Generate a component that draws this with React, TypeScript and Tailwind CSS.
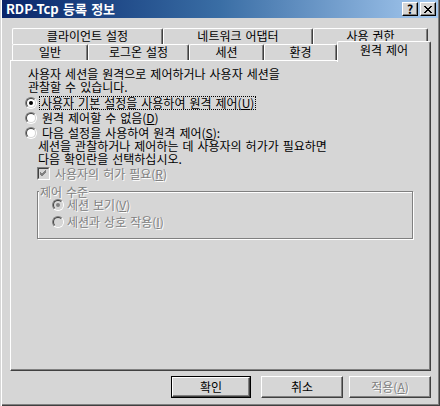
import React from 'react';

const face = "font-['Noto_Sans_CJK_KR',sans-serif]";
const dim = 'text-[#808080] [text-shadow:1px_1px_0_#fff]';

function Radio({ checked = false, disabled = false }: { checked?: boolean; disabled?: boolean }) {
  return (
    <span className="relative inline-block h-3 w-3 shrink-0 rounded-full border border-t-[#808080] border-l-[#808080] border-r-white border-b-white">
      <span
        className={`absolute inset-0 rounded-full border border-t-[#404040] border-l-[#404040] border-r-[#d6d6d6] border-b-[#d6d6d6] ${
          disabled ? 'bg-[#d6d6d6]' : 'bg-white'
        }`}
      >
        {checked && (
          <span className={`absolute left-[2px] top-[2px] h-1 w-1 rounded-full ${disabled ? 'bg-[#808080]' : 'bg-black'}`} />
        )}
      </span>
    </span>
  );
}

function Check() {
  return (
    <span className="relative inline-block h-[13px] w-[13px] shrink-0 border border-t-[#808080] border-l-[#808080] border-r-white border-b-white">
      <span className="absolute inset-0 border border-t-[#404040] border-l-[#404040] border-r-[#d6d6d6] border-b-[#d6d6d6] bg-[#d6d6d6]">
        <svg width="9" height="9" viewBox="0 0 9 9" className="absolute left-0 top-0">
          <path d="M1 4 L3 6 L7 2 M1 5 L3 7 L7 3 M1 3 L3 5 L7 1" stroke="#808080" strokeWidth="1" fill="none" shapeRendering="crispEdges" />
        </svg>
      </span>
    </span>
  );
}

function Tab({ label, w, front }: { label: string; w: string; front?: boolean }) {
  return (
    <div
      className={`${w} ${front ? 'h-[17px]' : 'h-[16px]'} flex shrink-0 items-start justify-center rounded-t-[2px] border-l border-t border-r border-l-white border-t-white border-r-[#404040] shadow-[inset_-1px_0_#808080] leading-[14px]`}
    >
      {label}
    </div>
  );
}

function Btn({ label, def, disabled, w }: { label: React.ReactNode; def?: boolean; disabled?: boolean; w: string }) {
  return (
    <div className={`${w} h-[22px] ${def ? 'border border-black' : ''}`}>
      <div
        className={`flex h-full w-full items-center justify-center border border-t-white border-l-white border-r-[#404040] border-b-[#404040] shadow-[inset_-1px_-1px_#808080] ${
          disabled ? dim : ''
        }`}
      >
        {label}
      </div>
    </div>
  );
}

export default function App() {
  return (
    <div
      className={`${face} relative flex h-[406px] w-[440px] flex-col overflow-hidden bg-[#d6d6d6] text-[12px] [word-spacing:1.3px] text-black shadow-[inset_1px_0_#d6d6d6,inset_2px_0_#fff,inset_-1px_-1px_#404040,inset_-2px_-2px_#808080]`}
    >
      {/* title bar */}
      <div className="mx-[2px] flex h-[18px] shrink-0 items-center justify-between bg-linear-to-r from-[#0a246a] via-[#3a6ea5] to-[#a6caf0] pl-[4px] pr-[2px]">
        <span className="text-[13px] font-bold leading-[16px] text-white">RDP-Tcp 등록 정보</span>
        <div className="flex gap-[2px]">
          <div className="flex h-[14px] w-[16px] items-center justify-center border border-t-white border-l-white border-r-black border-b-black bg-[#d6d6d6] text-[12px] font-bold leading-none shadow-[inset_-1px_-1px_#808080]">
            ?
          </div>
          <div className="flex h-[14px] w-[16px] items-center justify-center border border-t-white border-l-white border-r-black border-b-black bg-[#d6d6d6] shadow-[inset_-1px_-1px_#808080]">
            <svg width="8" height="7" viewBox="0 0 8 7">
              <path d="M0 0 L7 7 M1 0 L8 7 M7 0 L0 7 M8 0 L1 7" stroke="#000" strokeWidth="1" shapeRendering="crispEdges" />
            </svg>
          </div>
        </div>
      </div>

      {/* tabs */}
      <div className="ml-[10px] mt-[10px] flex flex-col">
        <div className="flex h-[15px] pl-[2px]">
          <Tab label="클라이언트 설정" w="w-[151px]" />
          <Tab label="네트워크 어댑터" w="w-[150px]" />
          <Tab label="사용 권한" w="w-[115px]" />
        </div>
        <div className="flex h-[17px] items-start pl-[2px] pt-[1px]">
          <Tab label="일반" w="w-[76px]" front />
          <Tab label="로그온 설정" w="w-[101px]" front />
          <Tab label="세션" w="w-[75px]" front />
          <Tab label="환경" w="w-[73px]" front />
          <div className="relative z-10 -mt-[3px] flex h-[21px] w-[94px] shrink-0 justify-center rounded-t-[2px] border-l border-t border-r border-l-white border-t-white border-r-[#404040] bg-[#d6d6d6] pt-[1px] leading-[14px] shadow-[inset_-1px_0_#808080]">
            원격 제어
          </div>
        </div>

        {/* panel */}
        <div className="flex h-[311px] w-[421px] flex-col border border-l-white border-t-white border-r-[#404040] border-b-[#404040] pl-[17px] pt-[6px] shadow-[inset_-1px_-1px_#808080]">
          <p className="leading-[13px]">
            사용자 세션을 원격으로 제어하거나 사용자 세션을
            <br />
            관찰할 수 있습니다.
          </p>
          <div className="mt-[2px] flex h-[15px] items-center gap-[1px] -ml-[3px]">
            <Radio checked />
            <span className="ml-[1px] border border-dotted border-black px-[1px] leading-[12px]">
              사용자 기본 설정을 사용하여 원격 제어(<u>U</u>)
            </span>
          </div>
          <div className="flex h-[15px] items-center gap-[5px] -ml-[3px]">
            <Radio />
            <span className="leading-[13px]">
              원격 제어할 수 없음(<u>D</u>)
            </span>
          </div>
          <div className="flex h-[15px] items-center gap-[5px] -ml-[3px]">
            <Radio />
            <span className="leading-[13px]">
              다음 설정을 사용하여 원격 제어(<u>S</u>):
            </span>
          </div>
          <p className="ml-[10px] -mt-[1px] leading-[13px]">
            세션을 관찰하거나 제어하는 데 사용자의 허가가 필요하면
            <br />
            다음 확인란을 선택하십시오.
          </p>
          <div className="ml-[9px] mt-[1px] flex h-[15px] items-center gap-[5px]">
            <Check />
            <span className={`${dim} leading-[13px]`}>
              사용자의 허가 필요(<u>R</u>)
            </span>
          </div>
          <div className="relative ml-[9px] mt-[10px] h-[48px] w-[376px] border border-[#808080] shadow-[inset_1px_1px_#fff,1px_1px_#fff]">
            <span className={`absolute -top-[7px] left-[1px] bg-[#d6d6d6] px-[1px] leading-[13px] ${dim}`}>제어 수준</span>
            <div className="ml-[14px] mt-[4px] flex h-[17px] items-center gap-[3px]">
              <Radio checked disabled />
              <span className={`${dim} leading-[13px]`}>세션 보기(<u>V</u>)</span>
            </div>
            <div className="ml-[14px] flex h-[17px] items-center gap-[3px]">
              <Radio disabled />
              <span className={`${dim} leading-[13px]`}>세션과 상호 작용(<u>I</u>)</span>
            </div>
          </div>
        </div>
      </div>

      {/* buttons */}
      <div className="ml-[171px] mt-[5px] flex">
        <Btn label="확인" def w="w-[80px]" />
        <div className="w-[10px]" />
        <Btn label="취소" w="w-[82px]" />
        <div className="w-[6px]" />
        <Btn
          label={
            <>
              적용(<u>A</u>)
            </>
          }
          disabled
          w="w-[82px]"
        />
      </div>
    </div>
  );
}
